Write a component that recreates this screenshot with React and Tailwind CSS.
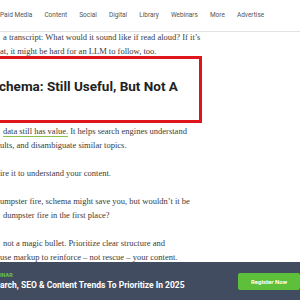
const navItems = ['Paid Media', 'Content', 'Social', 'Digital', 'Library', 'Webinars', 'More', 'Advertise']

export default function App() {
  return (
    <div className="w-[300px] h-[300px] overflow-hidden bg-white flex flex-col">
      {/* Top nav */}
      <nav className="h-[32px] shrink-0 border-b border-[#e3e3e3] flex items-center gap-[12px] font-['Roboto',sans-serif] text-[6.5px] text-[#555] whitespace-nowrap">
        {navItems.map((item) => (
          <span key={item}>{item}</span>
        ))}
      </nav>

      {/* Article body */}
      <div className="flex-1 overflow-hidden font-['Liberation_Serif',serif] text-[8.5px] leading-[14px] text-[#3b3b3b] whitespace-nowrap">
        <p className="pl-[3px] -mt-[1px] leading-[13.5px]">a transcript: What would it sound like if read aloud? If it’s</p>
        <p className="leading-[13.5px]">at, it might be hard for an LLM to follow, too.</p>

        <div className="-mt-[2px] -ml-[4px] w-[206px] h-[67px] border-[3px] border-[#e0141b] flex items-start pt-[19px]">
          <h2 className="font-['Roboto',sans-serif] font-bold text-[13.5px] leading-[16px] text-[#222]">chema: Still Useful, But Not A</h2>
        </div>

        <p className="pl-[3px] mt-[1px]">
          <span className="border-b border-[#8bc34a]">data still has value.</span> It helps search engines understand
        </p>
        <p>ults, and disambiguate similar topics.</p>

        <p className="mt-[14px]">ire it to understand your content.</p>

        <p className="mt-[14px]">umpster fire, schema might save you, but wouldn’t it be</p>
        <p className="pl-[3px]">dumpster fire in the first place?</p>

        <p className="mt-[14px] pl-[3px]">not a magic bullet. Prioritize clear structure and</p>
        <p>use markup to reinforce – not rescue – your content.</p>
      </div>

      {/* Webinar banner */}
      <div className="h-[38px] shrink-0 bg-[#424c61] flex items-center justify-between">
        <div className="flex flex-col font-['Roboto',sans-serif] font-bold whitespace-nowrap">
          <span className="text-[5.5px] leading-[7px] text-[#6cc24a]">INAR</span>
          <span className="text-[8.5px] leading-[12px] text-white">arch, SEO &amp; Content Trends To Prioritize In 2025</span>
        </div>
        <button className="w-[62px] h-[17px] bg-[#5dbf3a] rounded-[2px] text-white font-['Roboto',sans-serif] font-bold text-[6px]">
          Register Now
        </button>
      </div>
    </div>
  )
}
